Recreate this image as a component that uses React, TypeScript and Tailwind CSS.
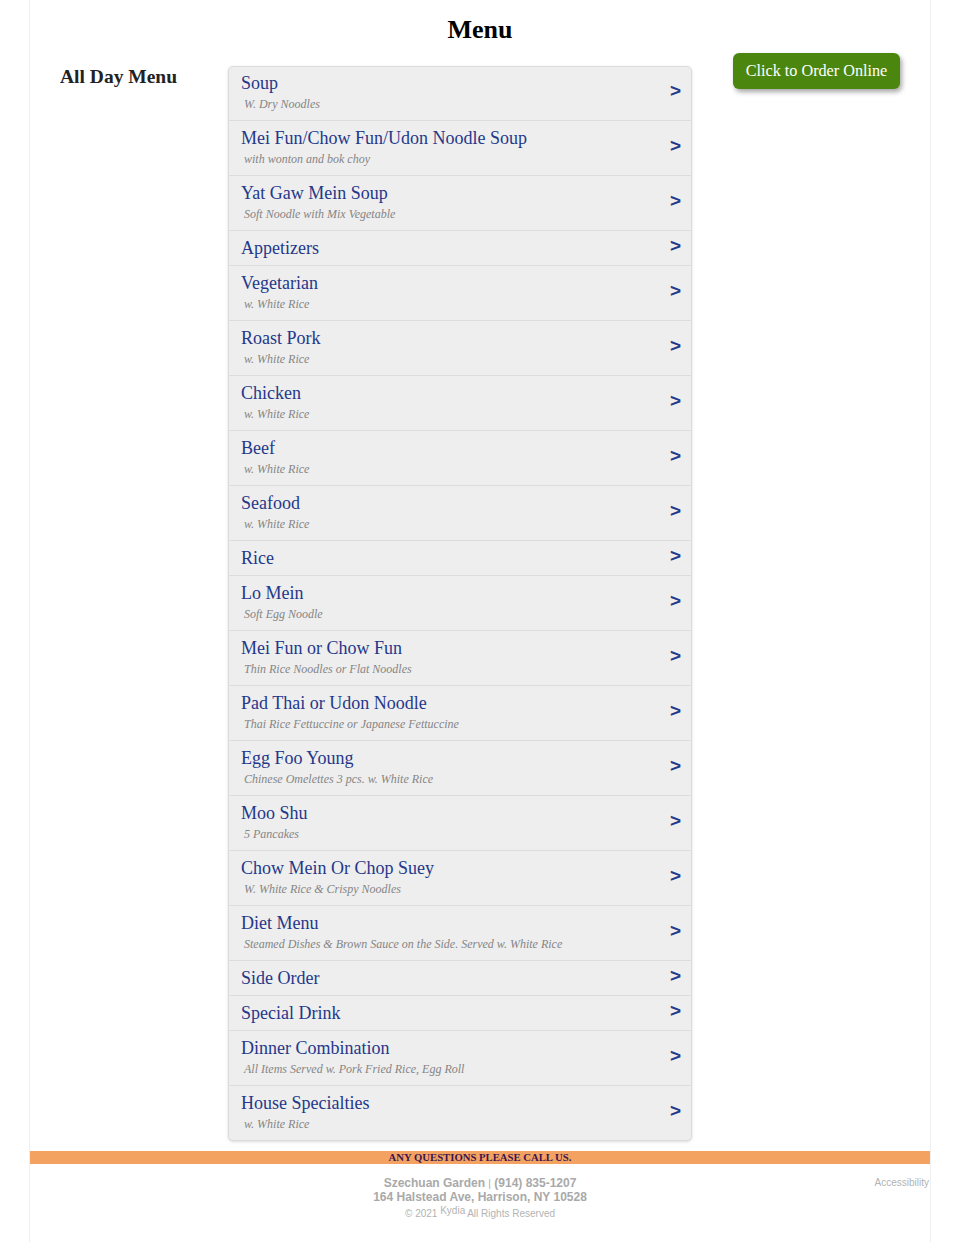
import React from 'react';

type Item = { name: string; note?: string };

const items: Item[] = [
  { name: 'Soup', note: 'W. Dry Noodles' },
  { name: 'Mei Fun/Chow Fun/Udon Noodle Soup', note: 'with wonton and bok choy' },
  { name: 'Yat Gaw Mein Soup', note: 'Soft Noodle with Mix Vegetable' },
  { name: 'Appetizers' },
  { name: 'Vegetarian', note: 'w. White Rice' },
  { name: 'Roast Pork', note: 'w. White Rice' },
  { name: 'Chicken', note: 'w. White Rice' },
  { name: 'Beef', note: 'w. White Rice' },
  { name: 'Seafood', note: 'w. White Rice' },
  { name: 'Rice' },
  { name: 'Lo Mein', note: 'Soft Egg Noodle' },
  { name: 'Mei Fun or Chow Fun', note: 'Thin Rice Noodles or Flat Noodles' },
  { name: 'Pad Thai or Udon Noodle', note: 'Thai Rice Fettuccine or Japanese Fettuccine' },
  { name: 'Egg Foo Young', note: 'Chinese Omelettes 3 pcs. w. White Rice' },
  { name: 'Moo Shu', note: '5 Pancakes' },
  { name: 'Chow Mein Or Chop Suey', note: 'W. White Rice & Crispy Noodles' },
  { name: 'Diet Menu', note: 'Steamed Dishes & Brown Sauce on the Side. Served w. White Rice' },
  { name: 'Side Order' },
  { name: 'Special Drink' },
  { name: 'Dinner Combination', note: 'All Items Served w. Pork Fried Rice, Egg Roll' },
  { name: 'House Specialties', note: 'w. White Rice' },
];

export default function App() {
  return (
    <div className="min-h-[1242px] bg-white font-['Liberation_Serif',serif]">
      <div className="mx-auto w-[902px] min-h-[1242px] border-x border-[#efefef]">
        {/* Page title */}
        <h1 className="h-[53px] pt-[15px] text-center text-[26px] font-bold leading-[30px] text-black">Menu</h1>

        <div className="flex items-start px-[30px]">
          {/* Category sidebar */}
          <div className="w-[168px] shrink-0 pt-[13px]">
            <h2 className="text-[19.5px] font-bold leading-[22px] text-[#222]">All Day Menu</h2>
          </div>

          {/* Menu list */}
          <div className="mt-[13px] w-[464px] shrink-0 overflow-hidden rounded-[5px] border border-[#dcdcdc] bg-[#eeeeee] shadow-[0_1px_3px_rgba(0,0,0,0.15)]">
            {items.map((it, i) => (
              <div
                key={it.name}
                className={`flex items-center justify-between pl-[12px] pr-[10px] ${i > 0 ? 'border-t border-[#dcdcdc] pt-[6px] pb-[6px]' : 'pt-[5px] pb-[6px]'}`}
              >
                <div>
                  <div className="text-[18px] leading-[22px] text-[#24388a]">{it.name}</div>
                  {it.note && (
                    <div className="pl-[3px] text-[12px] italic leading-[20px] text-[#858585]">{it.note}</div>
                  )}
                </div>
                <span className="-mt-[4px] font-['Liberation_Sans',sans-serif] text-[19px] font-bold leading-[20px] text-[#24388a]">&gt;</span>
              </div>
            ))}
          </div>

          {/* Order button */}
          <div className="ml-[41px] shrink-0">
            <button className="h-[36px] w-[167px] whitespace-nowrap rounded-[6px] bg-[#4b870f] text-[16.2px] leading-[20px] text-white shadow-[2px_3px_5px_rgba(0,0,0,0.35)]">
              Click to Order Online
            </button>
          </div>
        </div>

        {/* Footer */}
        <div className="mt-[10px] h-[13px] bg-[#f4a262] text-center text-[10.7px] font-bold uppercase leading-[13px] text-[#3b1650]">
          Any questions please call us.
        </div>
        <div className="relative pt-[12px] text-center font-['Liberation_Sans',sans-serif] text-[#a9a9a9]">
          <div className="text-[12px] font-bold leading-[14px]">
            Szechuan Garden <span className="text-[10px] font-normal leading-none">|</span> (914) 835-1207
          </div>
          <div className="text-[12px] font-bold leading-[14px]">164 Halstead Ave, Harrison, NY 10528</div>
          <div className="mt-[2px] text-[10px] leading-[16px] text-[#b3b3b3]">
            © 2021 <sup className="mr-[2px] text-[10px] top-[-0.3em]">Kydia</sup>All Rights Reserved
          </div>
          <span className="absolute right-[1px] top-[11px] text-[10px] text-[#b3b3b3]">Accessibility</span>
        </div>
      </div>
    </div>
  );
}
